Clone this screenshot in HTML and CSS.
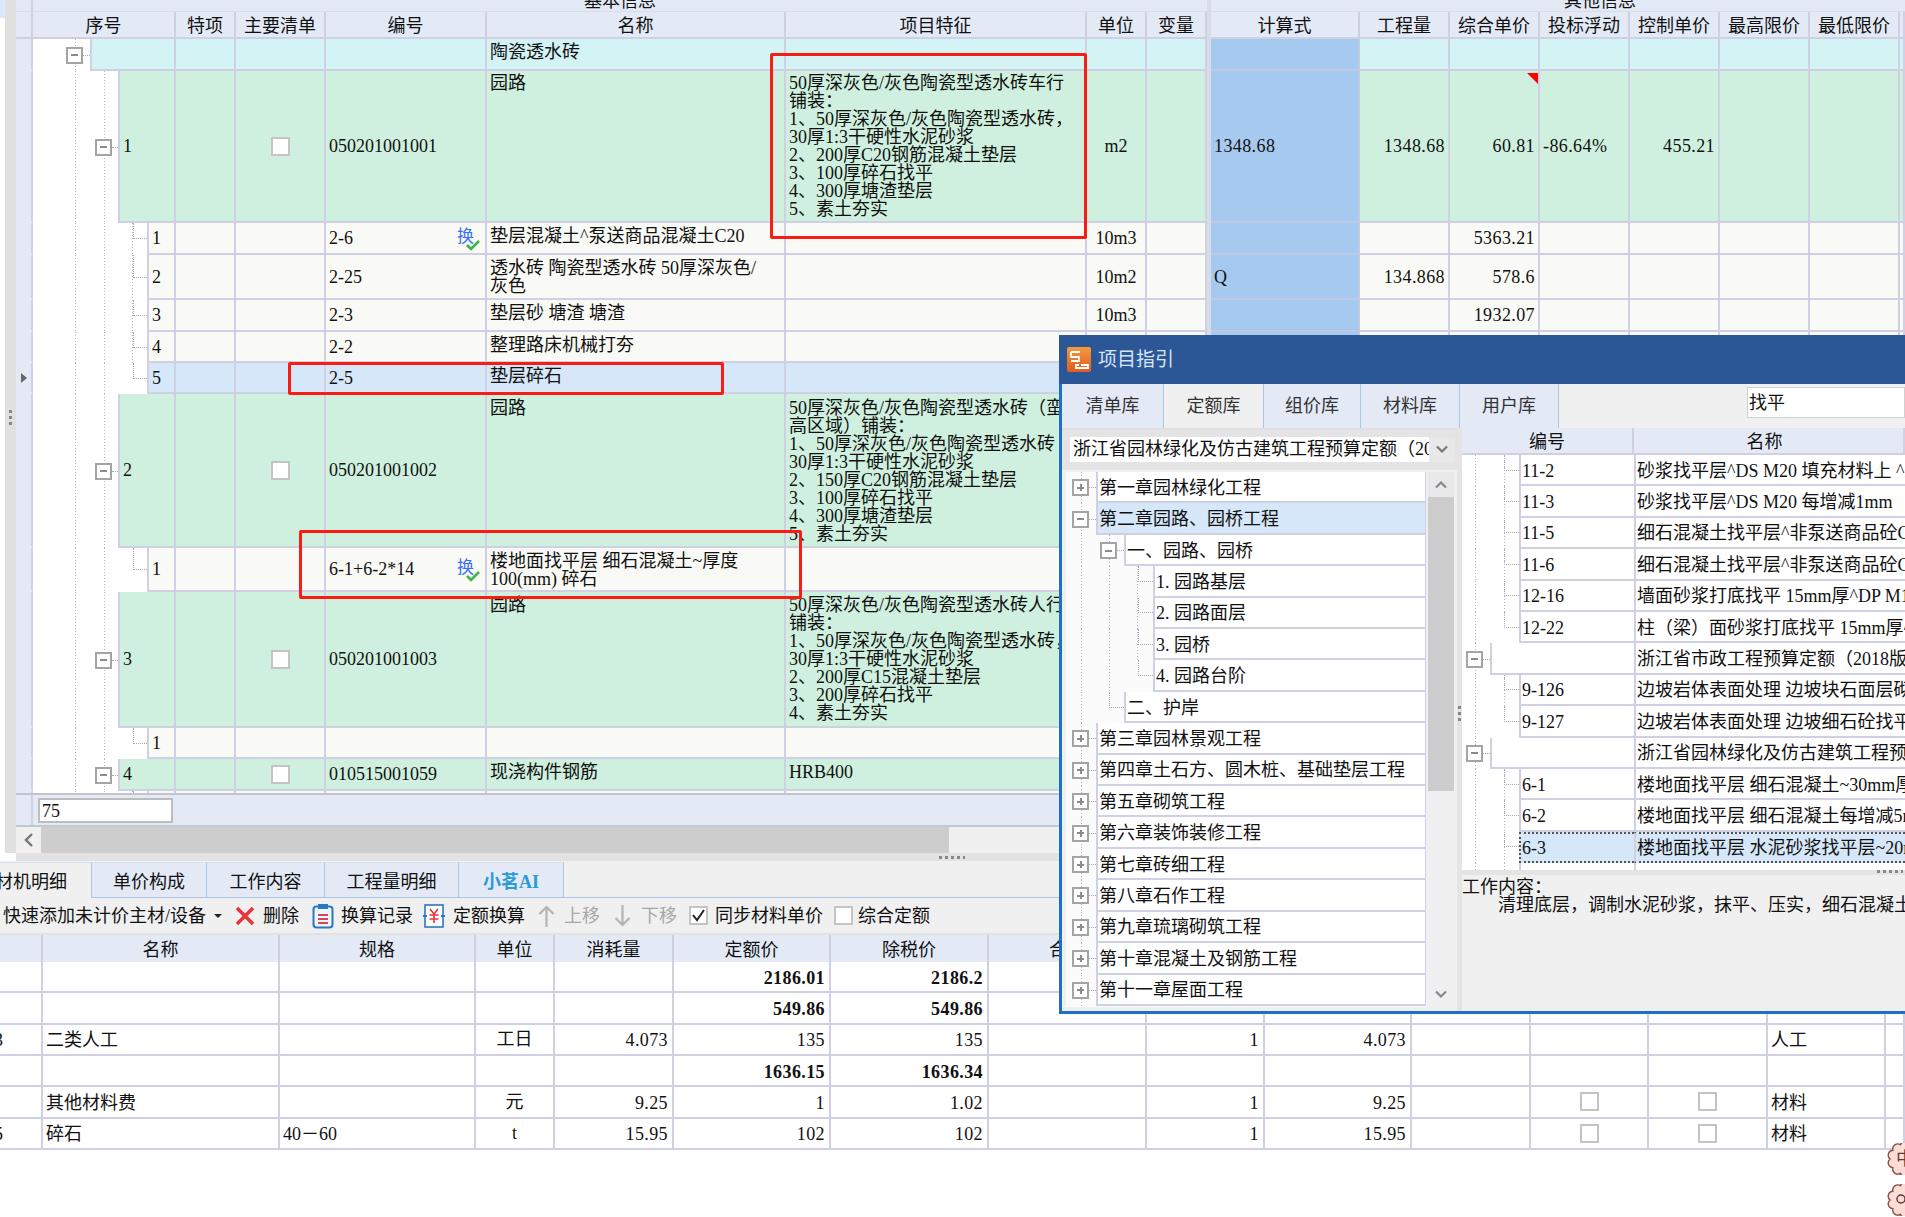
FILE: index.html
```html
<!DOCTYPE html>
<html lang="zh-CN">
<head>
    <meta charset="UTF-8">
    <title>项目指引</title>
    <link rel="stylesheet" href="styles.css">
</head>
<body>

<div class="top">
    <div class="side">
        <div class="side-edge"></div>
        <div class="side-bar"><span class="grip"></span></div>
    </div>
    <div class="pane">
        <div class="group-row">
            <div class="group-hdr"></div>
            <div class="group-a">基本信息</div>
            <div class="group-sep"></div>
            <div class="group-b">其他信息</div>
        </div>
        <div class="cols head">
            <div class="c"></div><div class="c">序号</div><div class="c">特项</div><div class="c">主要清单</div><div class="c">编号</div><div class="c">名称</div><div class="c">项目特征</div><div class="c">单位</div><div class="c">变量</div><div class="c sep"></div><div class="c">计算式</div><div class="c">工程量</div><div class="c">综合单价</div><div class="c">投标浮动</div><div class="c">控制单价</div><div class="c">最高限价</div><div class="c">最低限价</div><div class="c"></div>
        </div>
        <div class="rows">
            <div class="cols cyan h32">
                <div class="c hdr"></div>
                <div class="seq"><div class="indent lv0"><span class="box"></span><span class="dash"></span></div><div class="seq-num"></div></div>
                <div class="c"></div><div class="c"></div><div class="c"></div><div class="c txt">陶瓷透水砖</div><div class="c"></div><div class="c"></div><div class="c"></div><div class="c sep"></div><div class="c f"></div><div class="c"></div><div class="c"></div><div class="c"></div><div class="c"></div><div class="c"></div><div class="c"></div><div class="c"></div>
            </div>
            <div class="cols green h152">
                <div class="c hdr"></div>
                <div class="seq"><div class="indent lv1"><span class="box"></span><span class="dash"></span></div><div class="seq-num">1</div></div>
                <div class="c"></div><div class="c mid"><span class="cb"></span></div><div class="c left">050201001001</div><div class="c txt">园路</div>
                <div class="c txt">50厚深灰色/灰色陶瓷型透水砖车行<br>铺装：<br>1、50厚深灰色/灰色陶瓷型透水砖，<br>30厚1:3干硬性水泥砂浆<br>2、200厚C20钢筋混凝土垫层<br>3、100厚碎石找平<br>4、300厚塘渣垫层<br>5、素土夯实</div>
                <div class="c mid">m2</div><div class="c"></div><div class="c sep"></div><div class="c f left num">1348.68</div><div class="c right num">1348.68</div><div class="c right num flag">60.81</div><div class="c left num">-86.64%</div><div class="c right num">455.21</div><div class="c"></div><div class="c"></div><div class="c"></div>
            </div>
            <div class="cols plain h32">
                <div class="c hdr"></div>
                <div class="seq"><div class="indent lv2"><span class="stub"></span></div><div class="seq-num">1</div></div>
                <div class="c"></div><div class="c"></div><div class="c left code">2-6<span class="swap">换<svg class="tick" viewBox="0 0 14 11"><path d="M1 5l4 4 8-8" fill="none" stroke="#3cb54a" stroke-width="2.6"/></svg></span></div><div class="c txt">垫层混凝土^泵送商品混凝土C20</div><div class="c"></div><div class="c mid">10m3</div><div class="c"></div><div class="c sep"></div><div class="c f"></div><div class="c"></div><div class="c right num">5363.21</div><div class="c"></div><div class="c"></div><div class="c"></div><div class="c"></div><div class="c"></div>
            </div>
            <div class="cols plain h45">
                <div class="c hdr"></div>
                <div class="seq"><div class="indent lv2"><span class="stub"></span></div><div class="seq-num">2</div></div>
                <div class="c"></div><div class="c"></div><div class="c left">2-25</div><div class="c txt">透水砖 陶瓷型透水砖 50厚深灰色/<br>灰色</div><div class="c"></div><div class="c mid">10m2</div><div class="c"></div><div class="c sep"></div><div class="c f left">Q</div><div class="c right num">134.868</div><div class="c right num">578.6</div><div class="c"></div><div class="c"></div><div class="c"></div><div class="c"></div><div class="c"></div>
            </div>
            <div class="cols plain h32">
                <div class="c hdr"></div>
                <div class="seq"><div class="indent lv2"><span class="stub"></span></div><div class="seq-num">3</div></div>
                <div class="c"></div><div class="c"></div><div class="c left">2-3</div><div class="c txt">垫层砂 塘渣 塘渣</div><div class="c"></div><div class="c mid">10m3</div><div class="c"></div><div class="c sep"></div><div class="c f"></div><div class="c"></div><div class="c right num">1932.07</div><div class="c"></div><div class="c"></div><div class="c"></div><div class="c"></div><div class="c"></div>
            </div>
            <div class="cols plain h31">
                <div class="c hdr"></div>
                <div class="seq"><div class="indent lv2"><span class="stub"></span></div><div class="seq-num">4</div></div>
                <div class="c"></div><div class="c"></div><div class="c left">2-2</div><div class="c txt">整理路床机械打夯</div><div class="c"></div><div class="c mid"></div><div class="c"></div><div class="c sep"></div><div class="c f"></div><div class="c"></div><div class="c"></div><div class="c"></div><div class="c"></div><div class="c"></div><div class="c"></div><div class="c"></div>
            </div>
            <div class="cols picked h31">
                <div class="c hdr mid"><span class="pointer"></span></div>
                <div class="seq"><div class="indent lv2 last"><span class="stub"></span></div><div class="seq-num">5</div></div>
                <div class="c"></div><div class="c"></div><div class="c left">2-5</div><div class="c txt">垫层碎石</div><div class="c"></div><div class="c"></div><div class="c"></div><div class="c sep"></div><div class="c f"></div><div class="c"></div><div class="c"></div><div class="c"></div><div class="c"></div><div class="c"></div><div class="c"></div><div class="c"></div>
            </div>
            <div class="cols green h154">
                <div class="c hdr"></div>
                <div class="seq"><div class="indent lv1"><span class="box"></span><span class="dash"></span></div><div class="seq-num">2</div></div>
                <div class="c"></div><div class="c mid"><span class="cb"></span></div><div class="c left">050201001002</div><div class="c txt">园路</div>
                <div class="c txt">50厚深灰色/灰色陶瓷型透水砖（蛮<br>高区域）铺装：<br>1、50厚深灰色/灰色陶瓷型透水砖<br>30厚1:3干硬性水泥砂浆<br>2、150厚C20钢筋混凝土垫层<br>3、100厚碎石找平<br>4、300厚塘渣垫层<br>5、素土夯实</div>
                <div class="c"></div><div class="c"></div><div class="c sep"></div><div class="c f"></div><div class="c"></div><div class="c"></div><div class="c"></div><div class="c"></div><div class="c"></div><div class="c"></div><div class="c"></div>
            </div>
            <div class="cols plain h44">
                <div class="c hdr"></div>
                <div class="seq"><div class="indent lv2 last"><span class="stub"></span></div><div class="seq-num">1</div></div>
                <div class="c"></div><div class="c"></div><div class="c left code">6-1+6-2*14<span class="swap">换<svg class="tick" viewBox="0 0 14 11"><path d="M1 5l4 4 8-8" fill="none" stroke="#3cb54a" stroke-width="2.6"/></svg></span></div><div class="c txt">楼地面找平层 细石混凝土~厚度<br>100(mm) 碎石</div><div class="c"></div><div class="c"></div><div class="c"></div><div class="c sep"></div><div class="c f"></div><div class="c"></div><div class="c"></div><div class="c"></div><div class="c"></div><div class="c"></div><div class="c"></div><div class="c"></div>
            </div>
            <div class="cols green h136">
                <div class="c hdr"></div>
                <div class="seq"><div class="indent lv1"><span class="box"></span><span class="dash"></span></div><div class="seq-num">3</div></div>
                <div class="c"></div><div class="c mid"><span class="cb"></span></div><div class="c left">050201001003</div><div class="c txt">园路</div>
                <div class="c txt">50厚深灰色/灰色陶瓷型透水砖人行<br>铺装：<br>1、50厚深灰色/灰色陶瓷型透水砖，<br>30厚1:3干硬性水泥砂浆<br>2、200厚C15混凝土垫层<br>3、200厚碎石找平<br>4、素土夯实</div>
                <div class="c"></div><div class="c"></div><div class="c sep"></div><div class="c f"></div><div class="c"></div><div class="c"></div><div class="c"></div><div class="c"></div><div class="c"></div><div class="c"></div><div class="c"></div>
            </div>
            <div class="cols plain h31">
                <div class="c hdr"></div>
                <div class="seq"><div class="indent lv2 last"><span class="stub"></span></div><div class="seq-num">1</div></div>
                <div class="c"></div><div class="c"></div><div class="c"></div><div class="c"></div><div class="c"></div><div class="c"></div><div class="c"></div><div class="c sep"></div><div class="c f"></div><div class="c"></div><div class="c"></div><div class="c"></div><div class="c"></div><div class="c"></div><div class="c"></div><div class="c"></div>
            </div>
            <div class="cols green h32">
                <div class="c hdr"></div>
                <div class="seq"><div class="indent lv1"><span class="box"></span><span class="dash"></span></div><div class="seq-num">4</div></div>
                <div class="c"></div><div class="c mid"><span class="cb"></span></div><div class="c left">010515001059</div><div class="c txt">现浇构件钢筋</div><div class="c txt">HRB400</div><div class="c"></div><div class="c"></div><div class="c sep"></div><div class="c f"></div><div class="c"></div><div class="c"></div><div class="c"></div><div class="c"></div><div class="c"></div><div class="c"></div><div class="c"></div>
            </div>
            <div class="cols plain h32">
                <div class="c hdr"></div>
                <div class="seq"><div class="indent lv2"><span class="stub"></span></div><div class="seq-num"></div></div>
                <div class="c"></div><div class="c"></div><div class="c"></div><div class="c"></div><div class="c"></div><div class="c"></div><div class="c"></div><div class="c sep"></div><div class="c f"></div><div class="c"></div><div class="c"></div><div class="c"></div><div class="c"></div><div class="c"></div><div class="c"></div><div class="c"></div>
            </div>
        </div>
        <div class="foot">
            <div class="foot-hdr"></div>
            <div class="foot-input">75</div>
        </div>
        <div class="hscroll">
            <div class="hscroll-btn"><svg width="10" height="14" viewBox="0 0 10 14"><path d="M8 1L2 7l6 6" fill="none" stroke="#777" stroke-width="2.4"/></svg></div>
            <div class="hscroll-thumb"></div>
        </div>
        <div class="split"><span class="split-dots"></span></div>
    </div>
</div>

<div class="tabs">
    <div class="tab tab-first on">人材机明细</div>
    <div class="tab tab-b">单价构成</div>
    <div class="tab tab-c">工作内容</div>
    <div class="tab tab-d">工程量明细</div>
    <div class="tab tab-e ai">小茗AI</div>
</div>

<div class="toolbar">
    <span class="tool">快速添加未计价主材/设备</span>
    <span class="caret"></span>
    <svg class="ico ico-x" width="20" height="20" viewBox="0 0 20 20"><path d="M2 2l16 16M18 2L2 18" stroke="#e8343a" stroke-width="3.4"/></svg>
    <span class="tool t-del">删除</span>
    <svg class="ico ico-clip" width="22" height="26" viewBox="0 0 22 26"><rect x="1.5" y="3.5" width="19" height="21" rx="3" fill="#eef5fc" stroke="#2a78c2" stroke-width="2"/><rect x="6" y="1" width="10" height="5" fill="#2a78c2"/><path d="M6 12h10M6 16h10M6 20h10" stroke="#d8455a" stroke-width="1.8"/></svg>
    <span class="tool t-rec">换算记录</span>
    <svg class="ico ico-quota" width="22" height="26" viewBox="0 0 22 26"><rect x="2" y="2" width="18" height="22" fill="#fff" stroke="#2a78c2" stroke-width="1.6"/><path d="M7 6l4 5 4-5M11 11v9M6.500 12h9M6.500 16h9" fill="none" stroke="#e8343a" stroke-width="1.6"/><path d="M0 13h4M18 13h4" stroke="#2a78c2" stroke-width="2"/></svg>
    <span class="tool t-quota">定额换算</span>
    <svg class="ico ico-up" width="17" height="24" viewBox="0 0 17 24"><path d="M8.500 23V3M1.500 10l7-7 7 7" fill="none" stroke="#b4b4b4" stroke-width="2.2"/></svg>
    <span class="tool off t-up">上移</span>
    <svg class="ico ico-down" width="17" height="24" viewBox="0 0 17 24"><path d="M8.500 1v20M1.500 14l7 7 7-7" fill="none" stroke="#b4b4b4" stroke-width="2.2"/></svg>
    <span class="tool off t-down">下移</span>
    <span class="cb cb-tool"><svg width="15" height="15" viewBox="0 0 15 15"><path d="M2 7l4 5 7-10" fill="none" stroke="#222" stroke-width="2"/></svg></span>
    <span class="tool t-sync">同步材料单价</span>
    <span class="cb cb-tool cb-last"></span>
    <span class="tool t-all">综合定额</span>
</div>

<div class="lower">
    <div class="lcols lhead">
        <div class="c"></div><div class="c">名称</div><div class="c">规格</div><div class="c">单位</div><div class="c">消耗量</div><div class="c">定额价</div><div class="c">除税价</div><div class="c">合价</div><div class="c"></div><div class="c"></div><div class="c"></div><div class="c"></div><div class="c"></div><div class="c"></div><div class="c"></div>
    </div>
    <div class="lcols">
        <div class="c"></div><div class="c"></div><div class="c"></div><div class="c"></div><div class="c"></div><div class="c right num bold">2186.01</div><div class="c right num bold">2186.2</div><div class="c"></div><div class="c"></div><div class="c"></div><div class="c"></div><div class="c"></div><div class="c"></div><div class="c"></div><div class="c"></div>
    </div>
    <div class="lcols">
        <div class="c"></div><div class="c"></div><div class="c"></div><div class="c"></div><div class="c"></div><div class="c right num bold">549.86</div><div class="c right num bold">549.86</div><div class="c"></div><div class="c"></div><div class="c"></div><div class="c"></div><div class="c"></div><div class="c"></div><div class="c"></div><div class="c"></div>
    </div>
    <div class="lcols">
        <div class="c left cut"><span>3</span></div><div class="c left">二类人工</div><div class="c"></div><div class="c mid">工日</div><div class="c right num">4.073</div><div class="c right num">135</div><div class="c right num">135</div><div class="c"></div><div class="c right num">1</div><div class="c right num">4.073</div><div class="c"></div><div class="c"></div><div class="c"></div><div class="c left">人工</div><div class="c"></div>
    </div>
    <div class="lcols">
        <div class="c"></div><div class="c"></div><div class="c"></div><div class="c"></div><div class="c"></div><div class="c right num bold">1636.15</div><div class="c right num bold">1636.34</div><div class="c"></div><div class="c"></div><div class="c"></div><div class="c"></div><div class="c"></div><div class="c"></div><div class="c"></div><div class="c"></div>
    </div>
    <div class="lcols">
        <div class="c"></div><div class="c left">其他材料费</div><div class="c"></div><div class="c mid">元</div><div class="c right num">9.25</div><div class="c right num">1</div><div class="c right num">1.02</div><div class="c"></div><div class="c right num">1</div><div class="c right num">9.25</div><div class="c"></div><div class="c mid"><span class="cb"></span></div><div class="c mid"><span class="cb"></span></div><div class="c left">材料</div><div class="c"></div>
    </div>
    <div class="lcols">
        <div class="c left cut"><span>5</span></div><div class="c left">碎石</div><div class="c left">40－60</div><div class="c mid">t</div><div class="c right num">15.95</div><div class="c right num">102</div><div class="c right num">102</div><div class="c"></div><div class="c right num">1</div><div class="c right num">15.95</div><div class="c"></div><div class="c mid"><span class="cb"></span></div><div class="c mid"><span class="cb"></span></div><div class="c left">材料</div><div class="c"></div>
    </div>
</div>

<!-- red marks drawn over the grid -->
<div class="mark mark-a"></div>
<div class="mark mark-b"></div>
<div class="mark mark-c"></div>

<div class="badge badge-a">
    <svg width="40" height="32" viewBox="0 0 40 32"><path d="M35 16A5 5 0 0 1 32.100 24.800A5 5 0 0 1 24.600 30.300A5 5 0 0 1 15.400 30.300A5 5 0 0 1 7.900 24.800A5 5 0 0 1 5 16A5 5 0 0 1 7.900 7.200A5 5 0 0 1 15.400 1.700A5 5 0 0 1 24.600 1.700A5 5 0 0 1 32.100 7.200A5 5 0 0 1 35 16Z" fill="#fbdcd6" stroke="#8a5048" stroke-width="1.400"/><text x="11" y="22" class="badge-text">中</text></svg>
</div>
<div class="badge badge-b">
    <svg width="40" height="32" viewBox="0 0 40 32"><path d="M35 16A5 5 0 0 1 32.100 24.800A5 5 0 0 1 24.600 30.300A5 5 0 0 1 15.400 30.300A5 5 0 0 1 7.900 24.800A5 5 0 0 1 5 16A5 5 0 0 1 7.900 7.200A5 5 0 0 1 15.400 1.700A5 5 0 0 1 24.600 1.700A5 5 0 0 1 32.100 7.200A5 5 0 0 1 35 16Z" fill="#fbdcd6" stroke="#8a5048" stroke-width="1.400"/><circle cx="16" cy="15" r="4" fill="none" stroke="#5a3a36" stroke-width="1.400"/></svg>
</div>

<!-- 项目指引 window -->
<div class="dialog">
    <div class="dlg-title">
        <svg class="dlg-logo" width="24" height="25" viewBox="0 0 24 25"><defs><linearGradient id="logo" x1="0" y1="0" x2="0" y2="1"><stop offset="0" stop-color="#f59a3c"/><stop offset="1" stop-color="#e25c20"/></linearGradient></defs><rect width="24" height="25" rx="2" fill="url(#logo)"/><path d="M4 5h9M4 5v5h8v4H4M14 18h7v3H9v-3h3" fill="none" stroke="#fff" stroke-width="1.800"/></svg>
        <span>项目指引</span>
    </div>
    <div class="dlg-tabs">
        <div class="dtab dtab-a">清单库</div>
        <div class="dtab dtab-b on">定额库</div>
        <div class="dtab dtab-c">组价库</div>
        <div class="dtab dtab-d">材料库</div>
        <div class="dtab dtab-e">用户库</div>
        <div class="dlg-search">找平</div>
    </div>
    <div class="dlg-body">
        <div class="dlg-left">
            <div class="combo-bar">
                <div class="combo-text">浙江省园林绿化及仿古建筑工程预算定额（2018版）</div>
                <div class="combo-arrow"><svg width="12" height="9" viewBox="0 0 12 9"><path d="M1 1.500l5 5 5-5" fill="none" stroke="#777" stroke-width="2.200"/></svg></div>
            </div>
            <div class="tree-wrap">
                <div class="tree">
                    <div class="t-row"><div class="t-ind t0"><span class="box plus"></span><span class="dash"></span></div><div class="t-name">第一章园林绿化工程</div></div>
                    <div class="t-row sel"><div class="t-ind t0"><span class="box"></span><span class="dash"></span></div><div class="t-name">第二章园路、园桥工程</div></div>
                    <div class="t-row"><div class="t-ind t1"><span class="box"></span><span class="dash"></span></div><div class="t-name">一、园路、园桥</div></div>
                    <div class="t-row"><div class="t-ind t2"><span class="stub"></span></div><div class="t-name">1. 园路基层</div></div>
                    <div class="t-row"><div class="t-ind t2"><span class="stub"></span></div><div class="t-name">2. 园路面层</div></div>
                    <div class="t-row"><div class="t-ind t2"><span class="stub"></span></div><div class="t-name">3. 园桥</div></div>
                    <div class="t-row"><div class="t-ind t2 last"><span class="stub"></span></div><div class="t-name">4. 园路台阶</div></div>
                    <div class="t-row"><div class="t-ind t1 last"><span class="stub"></span></div><div class="t-name">二、护岸</div></div>
                    <div class="t-row"><div class="t-ind t0"><span class="box plus"></span><span class="dash"></span></div><div class="t-name">第三章园林景观工程</div></div>
                    <div class="t-row"><div class="t-ind t0"><span class="box plus"></span><span class="dash"></span></div><div class="t-name">第四章土石方、圆木桩、基础垫层工程</div></div>
                    <div class="t-row"><div class="t-ind t0"><span class="box plus"></span><span class="dash"></span></div><div class="t-name">第五章砌筑工程</div></div>
                    <div class="t-row"><div class="t-ind t0"><span class="box plus"></span><span class="dash"></span></div><div class="t-name">第六章装饰装修工程</div></div>
                    <div class="t-row"><div class="t-ind t0"><span class="box plus"></span><span class="dash"></span></div><div class="t-name">第七章砖细工程</div></div>
                    <div class="t-row"><div class="t-ind t0"><span class="box plus"></span><span class="dash"></span></div><div class="t-name">第八章石作工程</div></div>
                    <div class="t-row"><div class="t-ind t0"><span class="box plus"></span><span class="dash"></span></div><div class="t-name">第九章琉璃砌筑工程</div></div>
                    <div class="t-row"><div class="t-ind t0"><span class="box plus"></span><span class="dash"></span></div><div class="t-name">第十章混凝土及钢筋工程</div></div>
                    <div class="t-row"><div class="t-ind t0"><span class="box plus"></span><span class="dash"></span></div><div class="t-name">第十一章屋面工程</div></div>
                </div>
                <div class="vscroll">
                    <div class="vscroll-btn"><svg width="12" height="9" viewBox="0 0 12 9"><path d="M1 7.500l5-5 5 5" fill="none" stroke="#888" stroke-width="2.200"/></svg></div>
                    <div class="vscroll-thumb"></div>
                    <div class="vscroll-end"><svg width="12" height="9" viewBox="0 0 12 9"><path d="M1 1.500l5 5 5-5" fill="none" stroke="#888" stroke-width="2.200"/></svg></div>
                </div>
            </div>
        </div>
        <div class="dlg-split"><span class="grip"></span></div>
        <div class="dlg-right">
            <div class="idx-list">
                <div class="idx-row idx-head"><div class="idx-c">编号</div><div class="idx-c">名称</div></div>
                <div class="idx-row"><div class="idx-ind i2"><span class="stub"></span></div><div class="idx-code">11-2</div><div class="idx-name">砂浆找平层^DS M20 填充材料上 ^20mm厚</div></div>
                <div class="idx-row"><div class="idx-ind i2"><span class="stub"></span></div><div class="idx-code">11-3</div><div class="idx-name">砂浆找平层^DS M20 每增减1mm</div></div>
                <div class="idx-row"><div class="idx-ind i2"><span class="stub"></span></div><div class="idx-code">11-5</div><div class="idx-name">细石混凝土找平层^非泵送商品砼C20</div></div>
                <div class="idx-row"><div class="idx-ind i2"><span class="stub"></span></div><div class="idx-code">11-6</div><div class="idx-name">细石混凝土找平层^非泵送商品砼C20</div></div>
                <div class="idx-row"><div class="idx-ind i2"><span class="stub"></span></div><div class="idx-code">12-16</div><div class="idx-name">墙面砂浆打底找平 15mm厚^DP M15</div></div>
                <div class="idx-row"><div class="idx-ind i2 last"><span class="stub"></span></div><div class="idx-code">12-22</div><div class="idx-name">柱（梁）面砂浆打底找平 15mm厚^DP</div></div>
                <div class="idx-row"><div class="idx-ind i0"><span class="box"></span><span class="dash"></span></div><div class="idx-code"></div><div class="idx-name">浙江省市政工程预算定额（2018版）</div></div>
                <div class="idx-row"><div class="idx-ind i2"><span class="stub"></span></div><div class="idx-code">9-126</div><div class="idx-name">边坡岩体表面处理 边坡块石面层砌筑</div></div>
                <div class="idx-row"><div class="idx-ind i2 last"><span class="stub"></span></div><div class="idx-code">9-127</div><div class="idx-name">边坡岩体表面处理 边坡细石砼找平</div></div>
                <div class="idx-row"><div class="idx-ind i0"><span class="box"></span><span class="dash"></span></div><div class="idx-code"></div><div class="idx-name">浙江省园林绿化及仿古建筑工程预算定额</div></div>
                <div class="idx-row"><div class="idx-ind i2"><span class="stub"></span></div><div class="idx-code">6-1</div><div class="idx-name">楼地面找平层 细石混凝土~30mm厚</div></div>
                <div class="idx-row"><div class="idx-ind i2"><span class="stub"></span></div><div class="idx-code">6-2</div><div class="idx-name">楼地面找平层 细石混凝土每增减5mm</div></div>
                <div class="idx-row cur"><div class="idx-ind i2"><span class="stub"></span></div><div class="idx-code">6-3</div><div class="idx-name">楼地面找平层 水泥砂浆找平层~20mm厚</div></div>
                <div class="idx-row"><div class="idx-ind i2"></div><div class="idx-code"></div><div class="idx-name"></div></div>
            </div>
            <div class="idx-split"><span class="split-dots"></span></div>
            <div class="detail">工作内容：<br><span class="detail-line">清理底层，调制水泥砂浆，抹平、压实，细石混凝土</span></div>
        </div>
    </div>
</div>

</body>
</html>
```

FILE: styles.css
```css
html, body {
    margin: 0;
    padding: 0;
}
body {
    position: relative;
    width: 1905px;
    height: 1217px;
    overflow: hidden;
    background-color: white;
    color: #111;
    font-family: "Liberation Serif", "Noto Sans CJK SC", serif;
    font-size: 18px;
    line-height: 18px;
    --line: #cfd0e3;
    --head: #e3eaf6;
    --dots: linear-gradient(#b4b4c8 50%, transparent 50%);
}

/* upper grid */
.top {
    display: flex;
    height: 861px;
}
.side {
    display: flex;
    flex: 0 0 16px;
}
.side-edge {
    width: 5px;
    background: linear-gradient(#d8e9fa 18px, white 18px);
}
.side-bar {
    width: 11px;
    padding-top: 410px;
    box-sizing: border-box;
    background-color: #e0e0e0;
    height: 853px;
}
.grip {
    display: block;
    width: 3px;
    height: 18px;
    margin: 0 auto;
    background: linear-gradient(#888 50%, transparent 50%) 0 0 / 3px 6px;
}
.pane {
    flex: 1;
    min-width: 0;
}
.group-row {
    display: flex;
    height: 12px;
    overflow: hidden;
    background-color: var(--head);
    border-bottom: 1px solid #d8dbe8;
    box-sizing: border-box;
}
.group-hdr {
    width: 17px;
    border-right: 2px solid var(--line);
    box-sizing: border-box;
}
.group-a, .group-b {
    display: flex;
    justify-content: center;
    align-items: flex-end;
    padding-bottom: 1px;
}
.group-a {
    width: 1174px;
}
.group-sep {
    width: 4px;
    background-color: #d8dce8;
}
.group-b {
    flex: 1;
    padding-left: 84px;
}
.cols {
    display: grid;
    grid-template-columns: 17px 143px 60px 90px 161px 299px 301px 60px 60px 4px 149px 90px 90px 90px 90px 90px 90px 5px;
    background-color: var(--bg);
}
.c {
    box-sizing: border-box;
    min-width: 0;
    overflow: hidden;
    border-right: 2px solid var(--line);
    border-bottom: 2px solid var(--line);
    white-space: nowrap;
}
.head {
    height: 27px;
    background-color: var(--head);
}
.head .c {
    display: flex;
    justify-content: center;
    align-items: center;
    padding-top: 2px;
}
.rows {
    height: 754px;
    overflow: hidden;
}
.cyan { --bg: #d4f3f5; }
.green { --bg: #cff0de; }
.plain { --bg: #f9faf5; }
.picked { --bg: #d5e7f8; }
.h31 { height: 31px; }
.h32 { height: 32px; }
.h44 { height: 44px; }
.h45 { height: 45px; }
.h136 { height: 136px; }
.h152 { height: 152px; }
.h154 { height: 154px; }

.hdr {
    background-color: var(--head);
    border-bottom-color: transparent;
}
.sep {
    background-color: #d8dce8;
    border-right: none;
    border-bottom-color: transparent;
}
.f {
    background-color: #a6c9f0;
    border-bottom-color: #bcc8e4;
    border-right-color: #c3cbe0;
}
.txt {
    padding: 4px 0 0 3px;
}
.h152 .txt {
    padding-top: 3px;
}
.h154 .txt {
    padding-top: 5px;
}
.left, .right, .mid {
    display: flex;
    align-items: center;
}
.left {
    padding-left: 3px;
}
.right {
    justify-content: flex-end;
    padding-right: 3px;
}
.mid {
    justify-content: center;
}
.num {
    letter-spacing: 0.4px;
}
.bold {
    font-weight: bold;
}
.flag {
    position: relative;
}
.flag::after {
    content: "";
    position: absolute;
    top: 2px;
    right: 0;
    width: 11px;
    height: 11px;
    background-color: #f00;
    clip-path: polygon(0 0, 100% 0, 100% 100%);
}
.cb {
    display: block;
    flex: none;
    box-sizing: border-box;
    width: 19px;
    height: 19px;
    background-color: white;
    border: 2px solid #c4c4c4;
}
.pointer {
    width: 0;
    height: 0;
    border-left: 6px solid #666;
    border-top: 5px solid transparent;
    border-bottom: 5px solid transparent;
}

/* tree column */
.seq {
    display: flex;
    min-width: 0;
    background-color: white;
}
.seq-num {
    flex: 1;
    display: flex;
    align-items: center;
    box-sizing: border-box;
    padding-left: 3px;
    background-color: var(--bg);
    border-left: 2px solid var(--line);
    border-right: 2px solid var(--line);
    border-bottom: 2px solid var(--line);
}
.indent {
    display: flex;
    justify-content: flex-end;
    align-items: center;
    box-sizing: border-box;
    background-repeat: repeat-y;
    background-size: 1px 3px;
}
.lv0 {
    flex: 0 0 57px;
    background-image: var(--dots);
    background-position: 42px 0;
}
.lv0 .dash {
    flex-basis: 7px;
}
.lv1 {
    flex: 0 0 85px;
    background-image: var(--dots), var(--dots);
    background-position: 42px 0, 71px 0;
}
.lv2 {
    flex: 0 0 114px;
    background-image: var(--dots), var(--dots), var(--dots);
    background-position: 42px 0, 71px 0, 99px 0;
}
.lv2.last {
    background-image: var(--dots), var(--dots);
    background-position: 42px 0, 71px 0;
}
.box {
    position: relative;
    flex: none;
    box-sizing: border-box;
    width: 17px;
    height: 17px;
    background-color: white;
    border: 2px solid #a4a4a4;
}
.box::before {
    content: "";
    position: absolute;
    left: 3px;
    right: 3px;
    top: 5.500px;
    height: 2px;
    background-color: #8c8c8c;
}
.plus::after {
    content: "";
    position: absolute;
    top: 3px;
    bottom: 3px;
    left: 5.500px;
    width: 2px;
    background-color: #8c8c8c;
}
.dash {
    flex: 0 0 6px;
    border-top: 1px dotted #a8a8bc;
}
.stub {
    flex: 0 0 14px;
    box-sizing: border-box;
    align-self: flex-start;
    height: 50%;
    border-left: 1px dotted #a8a8bc;
    border-bottom: 1px dotted #a8a8bc;
}
.code {
    padding-right: 5px;
}
.swap {
    position: relative;
    margin-left: auto;
    width: 23px;
    height: 20px;
    color: #3b6ef5;
    font-size: 17px;
}
.tick {
    position: absolute;
    right: 0;
    bottom: -3px;
    width: 14px;
    height: 11px;
}

.foot {
    display: flex;
    height: 34px;
    box-sizing: border-box;
    padding-top: 0;
    background-color: var(--head);
    border-top: 2px solid #c2c4ce;
    border-bottom: 2px solid #c2c8d0;
}
.foot-hdr {
    width: 17px;
    border-right: 2px solid var(--line);
    box-sizing: border-box;
}
.foot-input {
    width: 135px;
    margin: 3px 0 2px 5px;
    padding-left: 2px;
    box-sizing: border-box;
    background-color: white;
    border: 2px solid #bdbdbd;
    display: flex;
    align-items: center;
}
.hscroll {
    display: flex;
    height: 26px;
    background-color: #f0f0f0;
}
.hscroll-btn {
    display: flex;
    justify-content: center;
    align-items: center;
    width: 25px;
    background-color: #f0f0f0;
}
.hscroll-thumb {
    width: 908px;
    background-color: #cdcdcd;
}
.split {
    display: flex;
    justify-content: center;
    align-items: center;
    height: 8px;
    background-color: #e2e2e2;
}
.split-dots {
    display: block;
    width: 26px;
    height: 3px;
    background: linear-gradient(90deg, #888 50%, transparent 50%) 0 0 / 6px 3px;
}
.pane .split {
    justify-content: flex-start;
    padding-left: 923px;
}

/* lower tabs */
.tabs {
    display: flex;
    height: 37px;
    padding-top: 1px;
    box-sizing: border-box;
    background-color: #f0f0f0;
    border-bottom: 1px solid #a9c6e2;
}
.tab {
    display: flex;
    justify-content: center;
    align-items: center;
    box-sizing: border-box;
    padding-top: 3px;
    background-color: var(--head);
    border-right: 1px solid #a9c6e2;
    border-top: 1px solid #d6e2f0;
    white-space: nowrap;
}
.tab.on {
    background-color: #f0f0f0;
    margin-bottom: -1px;
}
.tab-first {
    width: 92px;
    justify-content: flex-end;
    padding-right: 24px;
    overflow: hidden;
}
.tab-b { width: 115px; }
.tab-c { width: 118px; }
.tab-d { width: 134px; }
.tab-e { width: 105px; }
.ai {
    color: #2b9bd8;
    font-weight: bold;
}

.toolbar {
    display: flex;
    align-items: center;
    height: 37px;
    padding-left: 3px;
    box-sizing: border-box;
    background-color: #f0f0f0;
    border-bottom: 2px solid #e2e2e2;
    white-space: nowrap;
}
.tool {
    flex: none;
}
.tool.off {
    color: #a8a8a8;
}
.caret {
    margin-left: 8px;
    border-top: 4px solid #222;
    border-left: 4px solid transparent;
    border-right: 4px solid transparent;
}
.ico {
    flex: none;
}
.ico-x { margin-left: 13px; }
.t-del { margin-left: 8px; }
.ico-clip { margin-left: 13px; }
.t-rec { margin-left: 7px; }
.ico-quota { margin-left: 10px; }
.t-quota { margin-left: 8px; }
.ico-up { margin-left: 13px; }
.t-up { margin-left: 9px; }
.ico-down { margin-left: 14px; }
.t-down { margin-left: 10px; }
.cb-tool { margin-left: 12px; display: flex; align-items: center; justify-content: center; }
.t-sync { margin-left: 7px; }
.cb-last { margin-left: 11px; }
.t-all { margin-left: 5px; }

/* lower grid */
.lcols {
    display: grid;
    grid-template-columns: 43px 237px 196px 79px 119px 157px 158px 158px 118px 147px 119px 118px 119px 118px 19px;
    height: 31.330px;
}
.lcols .c {
    padding-top: 2px;
}
.lhead {
    height: 27px;
    background-color: var(--head);
}
.lhead .c {
    display: flex;
    justify-content: center;
    align-items: center;
    border-bottom: none;
}
.lcols .right {
    padding-right: 4px;
}
.lcols .mid {
    padding-top: 0;
}
.cut span {
    margin-left: -9px;
}

/* red marks */
.mark {
    position: absolute;
    box-sizing: border-box;
    border: 3px solid #f81c12;
    border-radius: 2px;
}
.mark-a {
    left: 770px;
    top: 53px;
    width: 317px;
    height: 186px;
}
.mark-b {
    left: 288px;
    top: 362px;
    width: 436px;
    height: 33px;
}
.mark-c {
    left: 299px;
    top: 530px;
    width: 503px;
    height: 69px;
}

.badge {
    position: absolute;
    left: 1885px;
}
.badge-a { top: 1143px; }
.badge-b { top: 1184px; }
.badge-text {
    font-size: 18px;
    fill: #5a3a36;
}

/* dialog */
.dialog {
    position: absolute;
    left: 1059px;
    top: 335px;
    right: 0;
    height: 679px;
    display: flex;
    flex-direction: column;
    box-sizing: border-box;
    background-color: #f0f0f0;
    border-left: 3px solid #1b72c4;
    border-bottom: 3px solid #1b72c4;
}
.dlg-title {
    display: flex;
    align-items: center;
    flex: 0 0 49px;
    margin-left: -3px;
    padding-left: 8px;
    background-color: #2b5797;
    color: #d8e4f2;
    font-size: 19px;
}
.dlg-logo {
    margin-right: 7px;
}
.dlg-tabs {
    display: flex;
    flex: 0 0 44px;
}
.dtab {
    display: flex;
    justify-content: center;
    align-items: center;
    box-sizing: border-box;
    background-color: var(--head);
    border-right: 1px solid #a9c6e2;
    color: #333;
}
.dtab.on {
    background-color: #f0f0f0;
}
.dtab-a { width: 102px; }
.dtab-b { width: 100px; }
.dtab-c { width: 97px; }
.dtab-d { width: 99px; }
.dtab-e { width: 99px; }
.dlg-search {
    flex: 1;
    margin: 3px 0 10px 188px;
    padding-left: 1px;
    display: flex;
    align-items: center;
    background-color: white;
    border: 1px solid #d0d0d0;
}
.dlg-body {
    flex: 1;
    display: flex;
    min-height: 0;
}
.dlg-left {
    display: flex;
    flex-direction: column;
    flex: 0 0 395px;
    box-sizing: border-box;
    border-top: 2px solid #e0e0e0;
}
.combo-bar {
    display: flex;
    flex: 0 0 40px;
    box-sizing: border-box;
    padding: 7px 2px 8px 8px;
    background-color: #e4e4e4;
}
.combo-text {
    flex: 0 0 359px;
    box-sizing: border-box;
    padding: 3px 0 0 3px;
    overflow: hidden;
    white-space: nowrap;
    background-color: white;
}
.combo-arrow {
    flex: 1;
    display: flex;
    justify-content: center;
    align-items: center;
    background-color: #e8e8e8;
}
.tree-wrap {
    display: flex;
    flex: 1;
    min-height: 0;
    padding: 2px 0 4px 4px;
}
.tree {
    flex: 0 0 360px;
    overflow: hidden;
    background-color: #fbfbfb;
}
.t-row {
    display: flex;
    height: 31.420px;
}
.t-ind {
    display: flex;
    justify-content: flex-end;
    align-items: center;
    flex: none;
    box-sizing: border-box;
    background-repeat: repeat-y;
    background-size: 1px 3px;
}
.t0 {
    width: 30px;
    background-image: var(--dots);
    background-position: 15px 0;
}
.t1 {
    width: 58px;
    background-image: var(--dots), var(--dots);
    background-position: 15px 0, 43px 0;
}
.t1.last {
    background-image: var(--dots);
    background-position: 15px 0;
}
.t2 {
    width: 87px;
    background-image: var(--dots), var(--dots), var(--dots);
    background-position: 15px 0, 43px 0, 71px 0;
}
.t2.last {
    background-image: var(--dots), var(--dots);
    background-position: 15px 0, 43px 0;
}
.t-ind .dash {
    flex-basis: 7px;
}
.t1 .stub, .t2 .stub {
    flex-basis: 15px;
}
.t-name {
    flex: 1;
    display: flex;
    align-items: center;
    padding: 2px 0 0 1px;
    box-sizing: border-box;
    white-space: pre;
    overflow: hidden;
    background-color: white;
    border: 2px solid var(--line);
    border-top: none;
    border-right-width: 1px;
}
.t-row.sel .t-name {
    background-color: #d5e7f8;
}
.vscroll {
    display: flex;
    flex-direction: column;
    flex: 0 0 26px;
    margin-left: 2px;
    background-color: #f0f0f0;
}
.vscroll-btn {
    display: flex;
    justify-content: center;
    align-items: center;
    flex: 0 0 25px;
    background-color: #e8e8e8;
}
.vscroll-thumb {
    flex: 0 0 294px;
    background-color: #cdcdcd;
}
.vscroll-end {
    margin-top: auto;
    display: flex;
    justify-content: center;
    padding-bottom: 8px;
}
.dlg-split {
    flex: 0 0 5px;
    padding-top: 278px;
    box-sizing: border-box;
    background-color: #e4e4e4;
}
.dlg-right {
    flex: 1;
    display: flex;
    flex-direction: column;
    min-width: 0;
}
.idx-list {
    flex: 0 0 442px;
    overflow: hidden;
    background-color: white;
}
.idx-row {
    display: flex;
    height: 31.400px;
}
.idx-head {
    height: 27px;
    background-color: var(--head);
}
.idx-c {
    display: flex;
    justify-content: center;
    align-items: center;
    box-sizing: border-box;
    padding-top: 3px;
    border-right: 2px solid var(--line);
    border-bottom: 2px solid var(--line);
}
.idx-c:first-child {
    flex: 0 0 172px;
}
.idx-c:last-child {
    flex: 1;
    padding-right: 8px;
}
.idx-ind {
    display: flex;
    justify-content: flex-end;
    align-items: center;
    flex: 0 0 28px;
    box-sizing: border-box;
    background-repeat: repeat-y;
    background-size: 1px 3px;
    background-image: var(--dots);
    background-position: 13px 0;
}
.i2 {
    flex-basis: 57px;
    background-image: var(--dots), var(--dots);
    background-position: 13px 0, 42px 0;
}
.i2.last {
    background-image: var(--dots);
    background-position: 13px 0;
}
.i2 .stub {
    flex-basis: 15px;
}
.i0 .dash {
    flex-basis: 7px;
}
.idx-code {
    flex: 1;
    display: flex;
    align-items: center;
    box-sizing: border-box;
    padding: 2px 0 0 1px;
    border-left: 2px solid var(--line);
    border-bottom: 2px solid var(--line);
}
.idx-name {
    flex: 0 0 271px;
    display: flex;
    align-items: center;
    box-sizing: border-box;
    padding: 2px 0 0 1px;
    overflow: hidden;
    white-space: nowrap;
    border-left: 2px solid var(--line);
    border-bottom: 2px solid var(--line);
}
.cur .idx-code, .cur .idx-name {
    background-color: #d5e7f8;
    border-top: 2px dotted #555;
    border-bottom: 2px dotted #555;
}
.cur .idx-code {
    border-left: 2px dotted #555;
}
.idx-split {
    flex: 0 0 5px;
    display: flex;
    justify-content: flex-end;
    padding-right: 2px;
    background-color: #e4e4e4;
}
.detail {
    flex: 1;
    padding: 3px 0 0 0;
    white-space: nowrap;
    overflow: hidden;
}
.detail-line {
    margin-left: 36px;
}
```
